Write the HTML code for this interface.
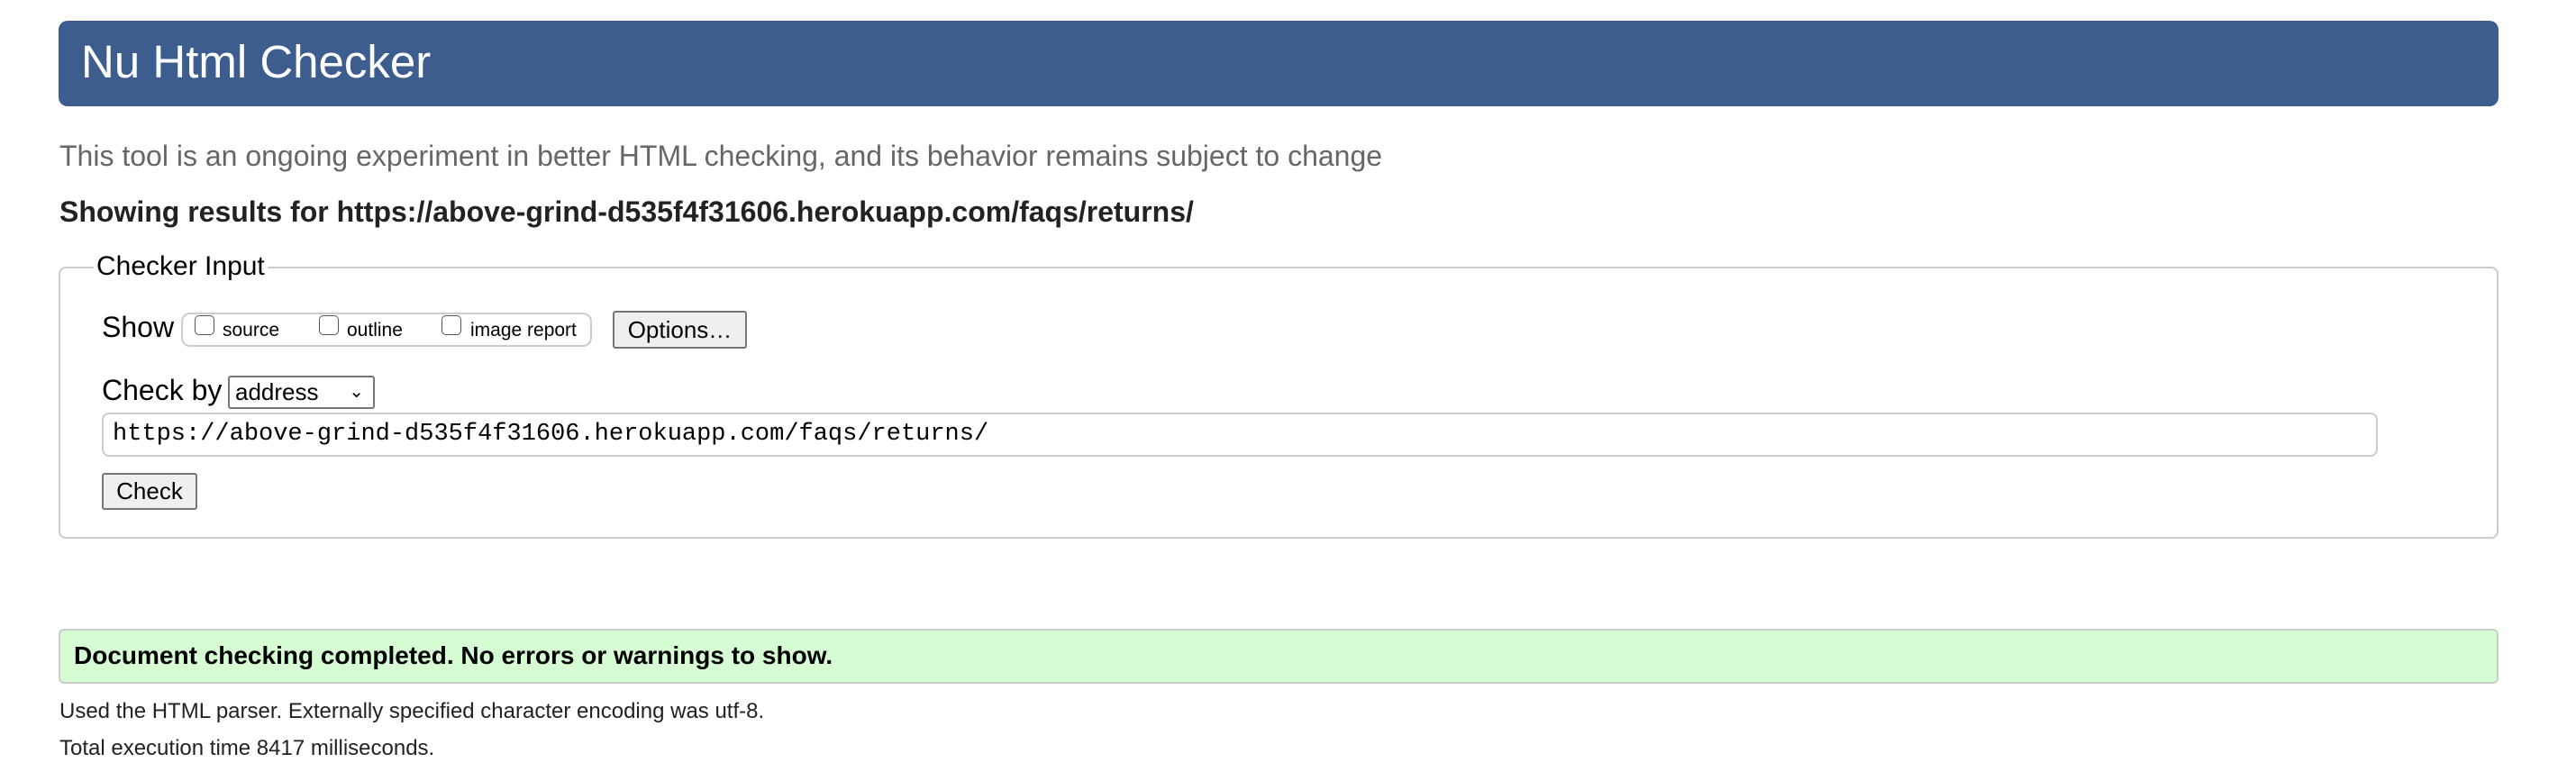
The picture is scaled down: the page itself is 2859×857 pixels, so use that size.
<!DOCTYPE html>
<html><head><meta charset="utf-8"><style>
body{margin:0;width:2859px;height:857px;background:#fff;font-family:"Liberation Sans",Arial,sans-serif;position:relative;overflow:hidden;color:#000}
.a{position:absolute;white-space:nowrap}
#hd{left:65px;top:23px;width:2708px;height:95px;background:#3d5d8f;border-radius:10px}
#hd span{position:absolute;left:25px;top:20px;font-size:51px;color:#fff;line-height:52px}
.cb{position:absolute;width:22px;height:22px;border:1.5px solid #555;border-radius:5px;background:#fff;box-sizing:border-box}
.btn{position:absolute;background:#efefef;border:2px solid #767676;border-radius:3px;box-sizing:border-box;text-align:center}
</style></head><body>
<div id="hd" class="a"><span>Nu Html Checker</span></div>
<div class="a" style="left:66px;top:155px;font-size:32px;color:#666;line-height:36px">This tool is an ongoing experiment in better HTML checking, and its behavior remains subject to change</div>
<div class="a" style="left:66px;top:218px;font-size:32px;font-weight:bold;color:#222;line-height:34px">Showing results for https://above-grind-d535f4f31606.herokuapp.com/faqs/returns/</div>
<div class="a" style="left:65px;top:296px;width:2708px;height:302px;border:2px solid #ccc;border-radius:8px;box-sizing:border-box"></div>
<div class="a" style="left:104px;top:280px;background:#fff;padding:0 3px;font-size:30px;line-height:32px">Checker Input</div>
<div class="a" style="left:113px;top:346px;font-size:32px;line-height:34px">Show</div>
<div class="a" style="left:201px;top:347px;width:456px;height:38px;border:2px solid #ccc;border-radius:10px;box-sizing:border-box"></div>
<div class="cb" style="left:216px;top:350px"></div>
<div class="a" style="left:247px;top:355px;font-size:21px">source</div>
<div class="cb" style="left:354px;top:350px"></div>
<div class="a" style="left:385px;top:355px;font-size:21px">outline</div>
<div class="cb" style="left:490px;top:350px"></div>
<div class="a" style="left:522px;top:355px;font-size:21px">image report</div>
<div class="btn" style="left:680px;top:345px;width:149px;height:42px;font-size:26px;line-height:38px">Options…</div>
<div class="a" style="left:113px;top:416px;font-size:32px;line-height:34px">Check by</div>
<div class="a" style="left:253px;top:417px;width:163px;height:37px;border:2px solid #767676;border-radius:3px;box-sizing:border-box;font-size:26px;line-height:33px;padding-left:6px">address<span style="position:absolute;right:10px;top:0;font-size:20px">&#8964;</span></div>
<div class="a" style="left:113px;top:458px;width:2526px;height:49px;border:2px solid #ccc;border-radius:8px;box-sizing:border-box;font-family:'Liberation Mono','DejaVu Sans Mono',monospace;font-size:27px;line-height:45px;padding-left:10px">https://above-grind-d535f4f31606.herokuapp.com/faqs/returns/</div>
<div class="btn" style="left:113px;top:525px;width:106px;height:41px;font-size:26px;line-height:37px">Check</div>
<div class="a" style="left:65px;top:698px;width:2708px;height:61px;background:#d5fcd2;border:2px solid #ccc;border-radius:6px;box-sizing:border-box"></div>
<div class="a" style="left:82px;top:712px;font-size:28px;font-weight:bold;line-height:32px">Document checking completed. No errors or warnings to show.</div>
<div class="a" style="left:66px;top:777px;font-size:24px;color:#222;line-height:26px">Used the HTML parser. Externally specified character encoding was utf-8.</div>
<div class="a" style="left:66px;top:818px;font-size:24px;color:#222;line-height:26px">Total execution time 8417 milliseconds.</div>
</body></html>
